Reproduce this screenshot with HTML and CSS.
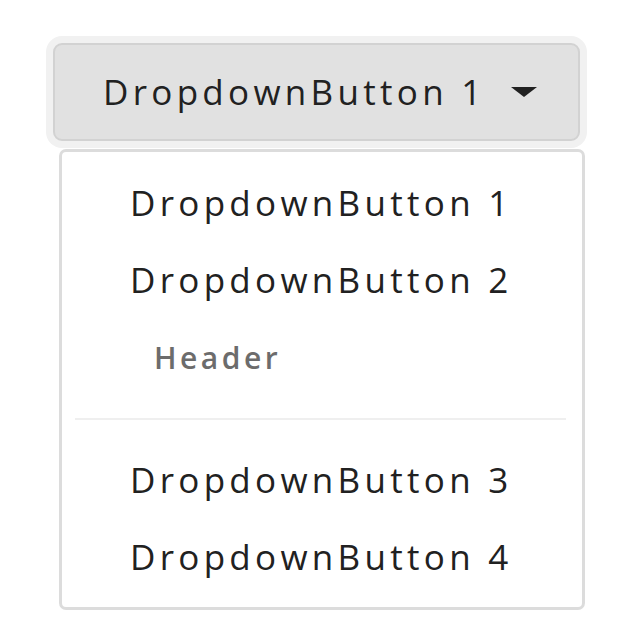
FILE: index.html
```html
<!DOCTYPE html>
<html>
<head>
<meta charset="utf-8">
<link rel="stylesheet" href="styles.css">
</head>
<body>
<div class="dropdown">
  <button class="toggle">DropdownButton 1<span class="caret"></span></button>
  <div class="menu">
    <div class="item">DropdownButton 1</div>
    <div class="item">DropdownButton 2</div>
    <div class="header">Header</div>
    <div class="divider"></div>
    <div class="item">DropdownButton 3</div>
    <div class="item">DropdownButton 4</div>
  </div>
</div>
</body>
</html>
```
FILE: styles.css
```css
html, body {
  margin: 0;
  padding: 0;
  background: #ffffff;
}
body {
  font-family: "Open Sans", "Noto Sans", sans-serif;
  color: #212121;
}
.dropdown {
  display: flex;
  flex-direction: column;
  align-items: flex-start;
  padding: 43px 0 0 53px;
  width: 531px;
}
.toggle {
  box-sizing: border-box;
  width: 527px;
  height: 98px;
  display: flex;
  align-items: center;
  padding: 0 0 0 48px;
  font-family: inherit;
  font-size: 35px;
  letter-spacing: 4.3px;
  line-height: 1.5;
  color: #212121;
  background: #e1e1e1;
  border: 2px solid #d2d2d2;
  border-radius: 9px;
  box-shadow: 0 0 0 7px #f1f1f1;
}
.caret {
  display: block;
  width: 0;
  height: 0;
  margin-left: 25px;
  border-top: 10px solid #212121;
  border-left: 13px solid transparent;
  border-right: 13px solid transparent;
}
.menu {
  box-sizing: border-box;
  margin: 8px 0 0 6px;
  width: 526px;
  padding: 12px 0 12px 0;
  border: 3px solid #dcdcdc;
  border-radius: 7px;
  background: #ffffff;
  display: flex;
  flex-direction: column;
}
.item {
  font-size: 35px;
  letter-spacing: 4.3px;
  line-height: 77px;
  padding-left: 68px;
  color: #212121;
}
.header {
  font-size: 30px;
  font-weight: 600;
  letter-spacing: 3.5px;
  line-height: 80px;
  padding-left: 92px;
  color: #6c6c6c;
}
.divider {
  height: 2px;
  background: #efefef;
  margin: 20px 16px 21px 13px;
}
```
